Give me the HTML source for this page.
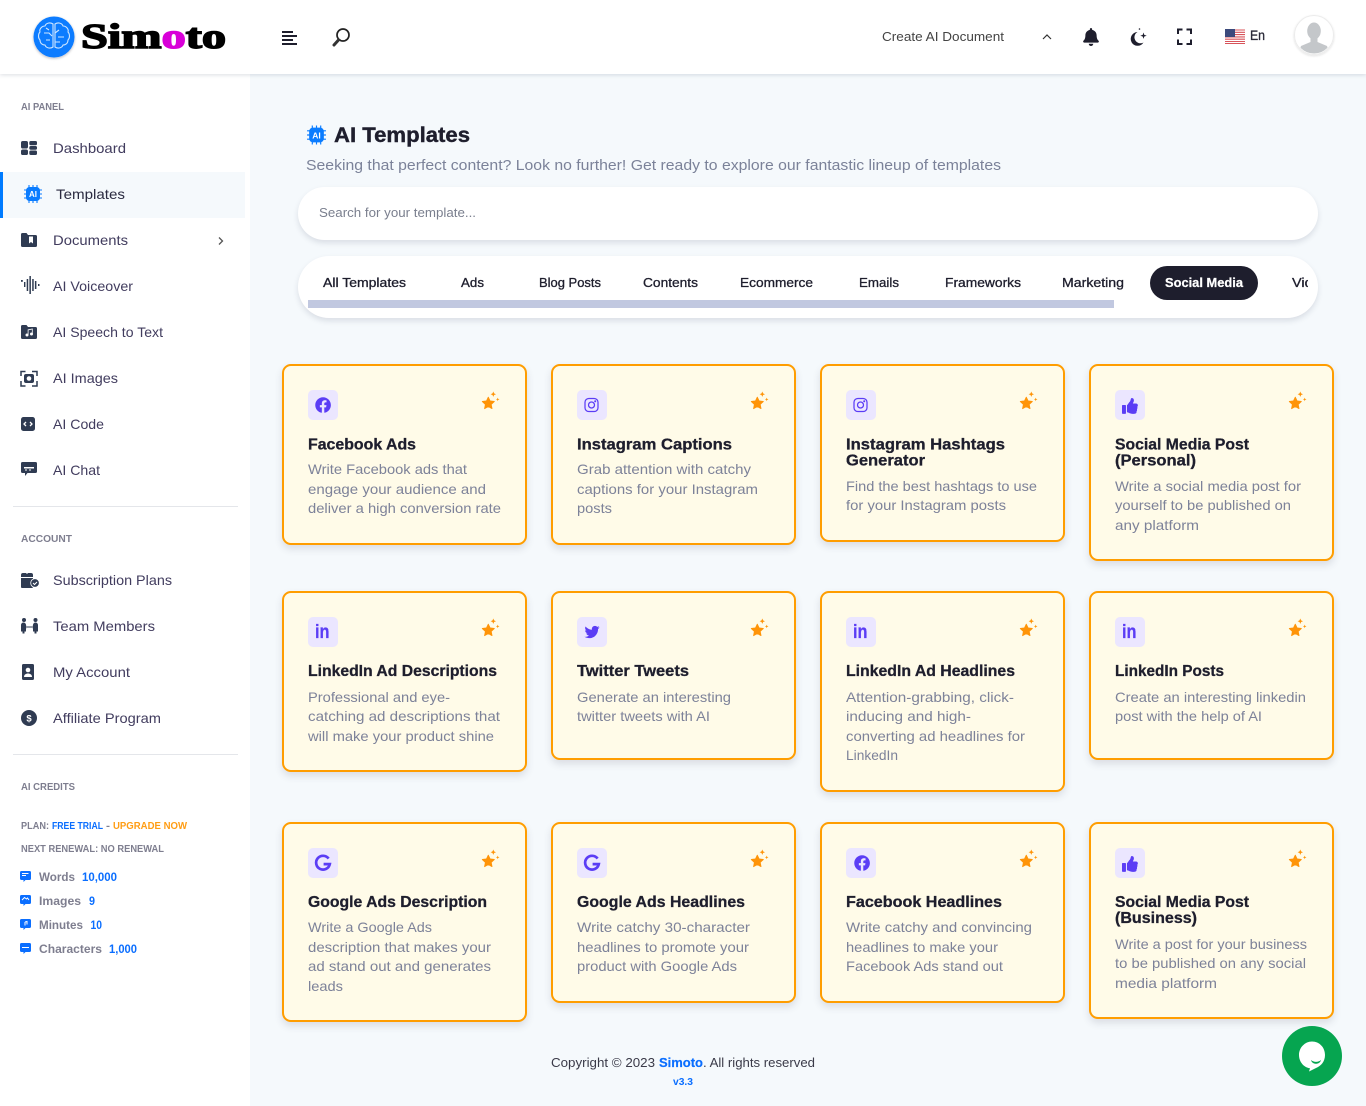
<!DOCTYPE html>
<html lang="en"><head><meta charset="utf-8"><title>AI Templates - Simoto</title>
<style>
*{box-sizing:border-box;margin:0;padding:0}
html,body{width:1366px;height:1106px;overflow:hidden;background:#f5f9fc;font-family:"Liberation Sans",sans-serif}
.a{position:absolute}
.head{left:0;top:0;width:1366px;height:74px;background:#fff;box-shadow:0 1px 4px rgba(40,50,80,.16)}
.side{left:0;top:74px;width:250px;height:1032px;background:#fff}
.act{left:0;top:172px;width:245px;height:46px;background:#f5f9fc;border-left:3px solid #007bff}
.hr{left:13px;width:225px;height:1px;background:#e4e6ea}
.pillbox{left:298px;width:1020px;background:#fff;box-shadow:0 3px 6px rgba(40,50,80,.13)}
.card{width:245px;background:#fffbe8;border:2px solid #ff9d00;border-radius:9px;box-shadow:0 4px 8px rgba(60,60,80,.14)}
.ib{width:30px;height:30px;background:#ebe6ff;border-radius:5px}
svg.o{position:absolute;left:0;top:0}
text{font-family:"Liberation Sans",sans-serif}
.n{font-size:14px;fill:#413c5e}
.s{font-size:10px;font-weight:700;fill:#7e7e8f}
.p{font-size:10px;font-weight:700;fill:#7e7e8f}
.c{font-size:11.5px;font-weight:700;fill:#7e7e8f}
.b{fill:#0a6eff}
.t{font-size:16px;font-weight:700;fill:#1e1e2d;stroke:#1e1e2d;stroke-width:.3}
.d{font-size:14px;fill:#7d8299}
.tb{font-size:12.5px;fill:#1e1e2d;stroke:#1e1e2d;stroke-width:.3}
</style></head><body>
<div class="a side"></div>
<div class="a head"></div>
<div class="a act"></div>
<div class="a hr" style="top:506px"></div>
<div class="a hr" style="top:754px"></div>
<div class="a pillbox" style="top:187px;height:53px;border-radius:27px"></div>
<div class="a pillbox" style="top:256px;height:62px;border-radius:31px"></div>
<div class="a" style="left:308px;top:300px;width:806px;height:8px;background:#c1c8e0"></div>
<div class="a" style="left:1150px;top:266px;width:108px;height:34px;border-radius:17px;background:#1e1e2d"></div>

<div class="a card" style="left:282px;top:364px;height:181px"></div>
<div class="a card" style="left:551px;top:364px;height:181px"></div>
<div class="a card" style="left:820px;top:364px;height:178px"></div>
<div class="a card" style="left:1089px;top:364px;height:197px"></div>
<div class="a card" style="left:282px;top:591px;height:181px"></div>
<div class="a card" style="left:551px;top:591px;height:169px"></div>
<div class="a card" style="left:820px;top:591px;height:201px"></div>
<div class="a card" style="left:1089px;top:591px;height:169px"></div>
<div class="a card" style="left:282px;top:822px;height:200px"></div>
<div class="a card" style="left:551px;top:822px;height:181px"></div>
<div class="a card" style="left:820px;top:822px;height:181px"></div>
<div class="a card" style="left:1089px;top:822px;height:197px"></div>

<div class="a ib" style="left:308px;top:390px"></div><div class="a ib" style="left:577px;top:390px"></div><div class="a ib" style="left:846px;top:390px"></div><div class="a ib" style="left:1115px;top:390px"></div>
<div class="a ib" style="left:308px;top:617px"></div><div class="a ib" style="left:577px;top:617px"></div><div class="a ib" style="left:846px;top:617px"></div><div class="a ib" style="left:1115px;top:617px"></div>
<div class="a ib" style="left:308px;top:848px"></div><div class="a ib" style="left:577px;top:848px"></div><div class="a ib" style="left:846px;top:848px"></div><div class="a ib" style="left:1115px;top:848px"></div>

<svg class="o" width="1366" height="1106" viewBox="0 0 1366 1106" xmlns="http://www.w3.org/2000/svg">
<defs>
<filter id="ls" x="-20%" y="-20%" width="140%" height="150%"><feDropShadow dx="0" dy="1" stdDeviation="1.2" flood-color="#223" flood-opacity=".3"/></filter>
<filter id="as" x="-20%" y="-20%" width="140%" height="150%"><feDropShadow dx="0" dy="1" stdDeviation="1" flood-color="#223" flood-opacity=".14"/></filter>
<clipPath id="vc"><rect x="1280" y="270" width="28" height="28"/></clipPath>
<clipPath id="av"><circle cx="1314" cy="35" r="18.500"/></clipPath>
<symbol id="star" viewBox="0 0 30 30" overflow="visible">
<path d="M8.300 7.200l1.800 3.800 4.200.5-3.100 2.900.8 4.200-3.700-2.100-3.700 2.100.8-4.200-3.100-2.900 4.200-.5z" fill="#ff9408" stroke="#ff9408" stroke-width=".9" stroke-linejoin="round"/>
<path d="M13.300 1.500l.8 1.900 1.900.8-1.900.8-.8 1.900-.8-1.900-1.900-.8 1.900-.8zM17.700 7.600l.5 1.300 1.300.5-1.300.5-.5 1.300-.5-1.300-1.300-.5 1.300-.5z" fill="#ff9408"/>
</symbol>
<path id="fb" d="M504 256C504 119 393 8 256 8S8 119 8 256c0 123.78 90.69 226.38 209.25 245V327.69h-63V256h63v-54.64c0-62.15 37-96.48 93.67-96.48 27.14 0 55.52 4.84 55.52 4.84v61h-31.28c-30.8 0-40.41 19.12-40.41 38.73V256h68.78l-11 71.69h-57.78V501C413.31 482.38 504 379.78 504 256z"/>
<path id="tw" d="M459.37 151.716c.325 4.548.325 9.097.325 13.645 0 138.72-105.583 298.558-298.558 298.558-59.452 0-114.68-17.219-161.137-47.106 8.447.974 16.568 1.299 25.34 1.299 49.055 0 94.213-16.568 130.274-44.832-46.132-.975-84.792-31.188-98.112-72.772 6.498.974 12.995 1.624 19.818 1.624 9.421 0 18.843-1.3 27.614-3.573-48.081-9.747-84.143-51.98-84.143-102.985v-1.299c13.969 7.797 30.214 12.67 47.431 13.319-28.264-18.843-46.781-51.005-46.781-87.391 0-19.492 5.197-37.36 14.294-52.954 51.655 63.675 129.3 105.258 216.365 109.807-1.624-7.797-2.599-15.918-2.599-24.04 0-57.828 46.782-104.934 104.934-104.934 30.213 0 57.502 12.67 76.67 33.137 23.715-4.548 46.456-13.32 66.599-25.34-7.798 24.366-24.366 44.833-46.132 57.827 21.117-2.273 41.584-8.122 60.426-16.243-14.292 20.791-32.161 39.308-52.628 54.253z"/>
<path id="th" d="M104 224H24c-13.255 0-24 10.745-24 24v240c0 13.255 10.745 24 24 24h80c13.255 0 24-10.745 24-24V248c0-13.255-10.745-24-24-24zM384 81.452c0 42.416-25.97 66.208-33.277 94.548h101.723c33.397 0 59.397 27.746 59.553 58.098.084 17.938-7.546 37.249-19.439 49.197l-.11.11c9.836 23.337 8.237 56.037-9.308 79.469 8.681 25.895-.069 57.704-16.382 74.757 4.298 17.598 2.244 32.575-6.148 44.632C440.202 511.587 389.616 512 346.839 512l-2.845-.001c-48.287-.017-87.806-17.598-119.56-31.725-15.957-7.099-36.821-15.887-52.651-16.178-6.54-.12-11.783-5.457-11.783-11.998v-213.77c0-3.2 1.282-6.271 3.558-8.521 39.614-39.144 56.648-80.587 89.117-113.111 14.804-14.832 20.188-37.236 25.393-58.902C282.515 39.293 291.817 0 312 0c24 0 72 8 72 81.452z"/>
<g id="ig" fill="none" stroke="#5b3df5" stroke-width="1.250"><rect x="1" y="1" width="13" height="13" rx="3.800"/><circle cx="7.500" cy="7.500" r="3"/><circle cx="11.200" cy="3.800" r=".4" fill="#5b3df5"/></g>
<g id="gg" fill="none" stroke="#5b3df5" stroke-width="2.700"><path d="M13.600 3.600A6.900 6.900 0 1 0 14.800 9.100H8.600"/></g>
<g id="chip">
<path d="M6 1v18M10 1v18M14 1v18M1 6h18M1 10h18M1 14h18" stroke="#0a7cff" stroke-width="1.100"/>
<rect x="3" y="3" width="14" height="14" rx="3.500" fill="#0a7cff"/>
</g>
<g id="bub"><path d="M1.500 0h8A1.500 1.500 0 0 1 11 1.500v6A1.500 1.500 0 0 1 9.500 9H5.500L3.500 11V9H1.500A1.500 1.500 0 0 1 0 7.500v-6A1.500 1.500 0 0 1 1.500 0z" fill="#0a6eff"/></g>
</defs>

<!-- logo -->
<circle cx="54" cy="37" r="20.500" fill="#0a7cff" filter="url(#ls)"/>
<g fill="none" stroke="#cfe6ff" stroke-width="1.100">
<path d="M53 24c-3-2-7-1-8 2-3 0-6 3-5 6-2 2-2 6 0 8 0 3 2 5 5 5 1 3 5 4 8 2zM55 24c3-2 7-1 8 2 3 0 6 3 5 6 2 2 2 6 0 8 0 3-2 5-5 5-1 3-5 4-8 2z"/>
<path d="M44 33h5l3 3M46 40h4M59 30l-4 3M58 37h6M55 42h5M46 28l3 2"/>
</g>
<text x="81" y="48" font-size="35" font-weight="700" textLength="145" lengthAdjust="spacingAndGlyphs" fill="#000" stroke="#000" stroke-width="1.500" style="font-family:'Liberation Serif',serif">Sim<tspan fill="#d800d8" stroke="#d800d8">o</tspan>to</text>

<!-- header left icons -->
<path d="M282 32h11M282 36h15M282 40h11M282 44h15" stroke="#1e1e2d" stroke-width="2"/>
<circle cx="343" cy="35" r="6" fill="none" stroke="#222" stroke-width="1.700"/>
<path d="M338.500 40l-4.500 5" stroke="#333" stroke-width="3" stroke-linecap="round"/>

<!-- header right -->
<text x="882" y="41" font-size="12.500" fill="#444" textLength="122" lengthAdjust="spacingAndGlyphs">Create AI Document</text>
<path d="M1043 39l4-4 4 4" fill="none" stroke="#333" stroke-width="1.200"/>
<svg x="1083" y="28" width="16" height="18" viewBox="0 0 448 512"><path fill="#1e1e2d" d="M224 512c35.320 0 63.970-28.650 63.970-64H160.030c0 35.350 28.650 64 63.970 64zm215.390-149.710c-19.320-20.760-55.470-51.990-55.470-154.290 0-77.700-54.480-139.900-127.940-155.160V32c0-17.670-14.320-32-31.980-32s-31.980 14.330-31.980 32v20.840C118.560 68.100 64.080 130.300 64.080 208c0 102.300-36.150 133.530-55.470 154.290-6 6.450-8.660 14.160-8.610 21.710.11 16.400 12.980 32 32.100 32h383.800c19.120 0 32-15.600 32.100-32 .05-7.550-2.610-15.270-8.610-21.710z"/></svg>
<path d="M1137.500 32a6.900 6.900 0 1 0 6 10.500a6 6 0 0 1-6-10.500z" fill="#1e1e2d"/>
<path d="M1143.500 32.500l.8 2.400 2.400.8-2.400.8-.8 2.400-.8-2.400-2.400-.8 2.400-.8z" fill="#1e1e2d"/>
<circle cx="1139.500" cy="29" r=".8" fill="#1e1e2d"/>
<path d="M1178 34v-4.500h4.500M1186.500 29.500h4.500v4.500M1191 39.500v4.500h-4.500M1182.500 44h-4.500v-4.500" fill="none" stroke="#1e1e2d" stroke-width="2"/>
<rect x="1225" y="29" width="20" height="15" fill="#fff"/>
<path d="M1225 30h20M1225 32.300h20M1225 34.600h20M1225 36.900h20M1225 39.200h20M1225 41.500h20M1225 43.500h20" stroke="#d8535a" stroke-width="1.100"/>
<rect x="1225" y="29" width="10" height="8" fill="#3c4a7c"/>
<text x="1250" y="40" font-size="13.500" fill="#2b2b3a" stroke="#2b2b3a" stroke-width=".3" textLength="15" lengthAdjust="spacingAndGlyphs">En</text>
<circle cx="1314" cy="35" r="19.500" fill="#fff" stroke="#ececec" filter="url(#as)"/>
<g clip-path="url(#av)" fill="#c4c7ca"><ellipse cx="1314" cy="31" rx="6.800" ry="8.500"/><path d="M1310.500 37h7v5l9.500 4 3 9h-32l3-9 9.500-4z"/></g>

<!-- sidebar -->
<text class="s" x="21" y="110" textLength="43" lengthAdjust="spacingAndGlyphs">AI PANEL</text>
<text class="n" x="53" y="153" textLength="73" lengthAdjust="spacingAndGlyphs">Dashboard</text>
<text class="n" style="fill:#2a2a40" x="56" y="199" textLength="69" lengthAdjust="spacingAndGlyphs">Templates</text>
<text class="n" x="53" y="245" textLength="75" lengthAdjust="spacingAndGlyphs">Documents</text>
<text class="n" x="53" y="291" textLength="80" lengthAdjust="spacingAndGlyphs">AI Voiceover</text>
<text class="n" x="53" y="337" textLength="110" lengthAdjust="spacingAndGlyphs">AI Speech to Text</text>
<text class="n" x="53" y="383" textLength="65" lengthAdjust="spacingAndGlyphs">AI Images</text>
<text class="n" x="53" y="429" textLength="51" lengthAdjust="spacingAndGlyphs">AI Code</text>
<text class="n" x="53" y="475" textLength="47" lengthAdjust="spacingAndGlyphs">AI Chat</text>
<text class="s" x="21" y="542" textLength="51" lengthAdjust="spacingAndGlyphs">ACCOUNT</text>
<text class="n" x="53" y="585" textLength="119" lengthAdjust="spacingAndGlyphs">Subscription Plans</text>
<text class="n" x="53" y="631" textLength="102" lengthAdjust="spacingAndGlyphs">Team Members</text>
<text class="n" x="53" y="677" textLength="77" lengthAdjust="spacingAndGlyphs">My Account</text>
<text class="n" x="53" y="723" textLength="108" lengthAdjust="spacingAndGlyphs">Affiliate Program</text>
<text class="s" x="21" y="790" textLength="54" lengthAdjust="spacingAndGlyphs">AI CREDITS</text>
<text class="p" x="21" y="829" textLength="28" lengthAdjust="spacingAndGlyphs">PLAN:</text>
<text class="p b" x="52" y="829" textLength="51" lengthAdjust="spacingAndGlyphs">FREE TRIAL</text>
<text class="p" x="106" y="829" textLength="4" lengthAdjust="spacingAndGlyphs">-</text>
<text class="p" style="fill:#ff9d14" x="113" y="829" textLength="74" lengthAdjust="spacingAndGlyphs">UPGRADE NOW</text>
<text class="p" x="21" y="852" textLength="143" lengthAdjust="spacingAndGlyphs">NEXT RENEWAL: NO RENEWAL</text>
<text class="c" x="39" y="881" textLength="36" lengthAdjust="spacingAndGlyphs">Words</text><text class="c b" x="82" y="881" textLength="35" lengthAdjust="spacingAndGlyphs">10,000</text>
<text class="c" x="39" y="905" textLength="42" lengthAdjust="spacingAndGlyphs">Images</text><text class="c b" x="89" y="905" textLength="6" lengthAdjust="spacingAndGlyphs">9</text>
<text class="c" x="39" y="929" textLength="44" lengthAdjust="spacingAndGlyphs">Minutes</text><text class="c b" x="90.500" y="929" textLength="11.500" lengthAdjust="spacingAndGlyphs">10</text>
<text class="c" x="39" y="953" textLength="63" lengthAdjust="spacingAndGlyphs">Characters</text><text class="c b" x="109" y="953" textLength="28" lengthAdjust="spacingAndGlyphs">1,000</text>

<!-- sidebar icons -->
<g fill="#2f3b52">
<rect x="21" y="141" width="7" height="7.500" rx="1.800"/><rect x="21" y="149.500" width="7" height="5.500" rx="1.800"/>
<rect x="29.300" y="141" width="7.700" height="4.200" rx="1.500"/><rect x="29.300" y="146" width="7.700" height="3.700" rx="1.500"/><rect x="29.300" y="150.500" width="7.700" height="4.500" rx="1.500"/>
<path d="M21 234.500a1.500 1.500 0 0 1 1.500-1.500h4l1.500 2h7.500a1.500 1.500 0 0 1 1.500 1.500v9a1.500 1.500 0 0 1-1.500 1.500h-13a1.500 1.500 0 0 1-1.500-1.500z"/>
<path d="M21 326.500a1.500 1.500 0 0 1 1.500-1.500h4l1.500 2h7.500a1.500 1.500 0 0 1 1.500 1.500v9a1.500 1.500 0 0 1-1.500 1.500h-13a1.500 1.500 0 0 1-1.500-1.500z"/>
<rect x="21" y="417" width="14" height="14" rx="2.500"/>
<path d="M22.500 462h13a1.500 1.500 0 0 1 1.500 1.500v8a1.500 1.500 0 0 1-1.500 1.500h-8l-2.500 3v-3h-2.500a1.500 1.500 0 0 1-1.500-1.500v-8a1.500 1.500 0 0 1 1.500-1.500z"/>
<path d="M21 578h12v9a1 1 0 0 1-1 1H22a1 1 0 0 1-1-1zM21 577v-2a2 2 0 0 1 2-2h3l1 1 1-1h3a2 2 0 0 1 2 2v2z"/>
<circle cx="35" cy="583" r="4.300" stroke="#fff" stroke-width=".8"/>
<circle cx="24" cy="620" r="2"/><circle cx="35.500" cy="620" r="2"/>
<path d="M21 625a2.500 2.500 0 0 1 5 0v6.500h-1.500v2h-2v-2H21zM33 625a2.500 2.500 0 0 1 5 0v6.500h-1.500v2h-2v-2H33z"/>
<path d="M23.500 664h9a1.500 1.500 0 0 1 1.500 1.500v13a1.500 1.500 0 0 1-1.500 1.500h-9a1.500 1.500 0 0 1-1.500-1.500v-13a1.500 1.500 0 0 1 1.500-1.500z"/>
<circle cx="29" cy="718" r="8"/>
<rect x="21" y="280" width="1.800" height="1.800"/><rect x="24" y="282" width="1.400" height="5" /><rect x="26.700" y="279" width="1.500" height="12"/><rect x="29.400" y="276" width="1.500" height="18"/><rect x="32.200" y="279" width="1.500" height="12"/><rect x="34.900" y="281" width="1.500" height="8"/><rect x="38" y="284" width="1.500" height="2"/>
</g>
<g fill="#fff">
<path d="M31.500 236.500h4v7l-2-1.500-2 1.500z" transform="translate(-2.500,0)"/>
<circle cx="27" cy="335" r="1.500"/><circle cx="31.500" cy="334" r="1.500"/><path d="M27.700 329.500l5-1v5.500h-.8v-4.500l-3.400.7v5h-.8z"/>
<path d="M26 422l-2 2 2 2M30 422l2 2-2 2" fill="none" stroke="#fff" stroke-width="1.300"/>
<path d="M24 467h10v1.500H24zM25 469.500h2v1h-2zM29 469.500h2v1h-2z"/>
<path d="M33 583l1.500 1.500 2.500-2.500" fill="none" stroke="#fff" stroke-width="1"/>
<circle cx="28" cy="670" r="2.300"/><path d="M24 677c0-2.500 2-3.500 4-3.500s4 1 4 3.500z"/>
</g>
<text x="29" y="721.500" font-size="9.500" font-weight="700" fill="#fff" text-anchor="middle">$</text>
<path d="M24 627h11M26 625l-2 2 2 2M33 625l2 2-2 2" fill="none" stroke="#2f3b52" stroke-width="1"/>
<path d="M21 376v-4.500h4.500M32 371.500h5v4.500M37 381v5h-5M25.500 386H21v-5" fill="none" stroke="#2f3b52" stroke-width="1.500"/>
<rect x="24" y="374" width="10" height="9" rx="2" fill="#2f3b52"/><circle cx="29" cy="378.500" r="2.300" fill="#fff"/>
<path d="M219 237.500l3.500 3.500-3.500 3.500" fill="none" stroke="#555" stroke-width="1.300"/>
<use href="#chip" x="23" y="184"/>
<text x="33" y="197" font-size="8" font-weight="700" fill="#fff" text-anchor="middle">AI</text>
<use href="#bub" x="20" y="871"/><use href="#bub" x="20" y="895"/><use href="#bub" x="20" y="919"/><use href="#bub" x="20" y="943"/>
<path d="M22 873.500h6.500M22 875.500h4M22 900l2.500-2.500 2 1.500 1-1 1.500 2M25 922l0 3.500M25 922l2-.5 0 3M22 947.500h7" stroke="#fff" stroke-width="1" fill="none"/>

<!-- title -->
<g transform="translate(306,124.500) scale(1.050)"><use href="#chip"/></g>
<text x="316.500" y="138.500" font-size="8.500" font-weight="700" fill="#fff" text-anchor="middle">AI</text>
<text x="334" y="142" font-size="21" font-weight="700" fill="#1e1e2d" stroke="#1e1e2d" stroke-width=".4" textLength="136" lengthAdjust="spacingAndGlyphs">AI Templates</text>
<text x="306" y="170" font-size="14.500" fill="#7b8299" textLength="695" lengthAdjust="spacingAndGlyphs">Seeking that perfect content? Look no further! Get ready to explore our fantastic lineup of templates</text>
<text x="319" y="217" font-size="12.500" fill="#7a7f8e" textLength="157" lengthAdjust="spacingAndGlyphs">Search for your template...</text>

<!-- tabs -->
<text class="tb" x="323" y="287" textLength="83" lengthAdjust="spacingAndGlyphs">All Templates</text>
<text class="tb" x="461" y="287" textLength="23" lengthAdjust="spacingAndGlyphs">Ads</text>
<text class="tb" x="539" y="287" textLength="62" lengthAdjust="spacingAndGlyphs">Blog Posts</text>
<text class="tb" x="643" y="287" textLength="55" lengthAdjust="spacingAndGlyphs">Contents</text>
<text class="tb" x="740" y="287" textLength="73" lengthAdjust="spacingAndGlyphs">Ecommerce</text>
<text class="tb" x="859" y="287" textLength="40" lengthAdjust="spacingAndGlyphs">Emails</text>
<text class="tb" x="945" y="287" textLength="76" lengthAdjust="spacingAndGlyphs">Frameworks</text>
<text class="tb" x="1062" y="287" textLength="62" lengthAdjust="spacingAndGlyphs">Marketing</text>
<text x="1165" y="287" font-size="12.500" font-weight="700" fill="#fff" stroke="#fff" stroke-width=".25" textLength="78" lengthAdjust="spacingAndGlyphs">Social Media</text>
<g clip-path="url(#vc)"><text class="tb" x="1292" y="287" textLength="44" lengthAdjust="spacingAndGlyphs">Videos</text></g>

<!-- stars -->
<use href="#star" x="480" y="390" width="30" height="30"/><use href="#star" x="749" y="390" width="30" height="30"/><use href="#star" x="1018" y="390" width="30" height="30"/><use href="#star" x="1287" y="390" width="30" height="30"/>
<use href="#star" x="480" y="617" width="30" height="30"/><use href="#star" x="749" y="617" width="30" height="30"/><use href="#star" x="1018" y="617" width="30" height="30"/><use href="#star" x="1287" y="617" width="30" height="30"/>
<use href="#star" x="480" y="848" width="30" height="30"/><use href="#star" x="749" y="848" width="30" height="30"/><use href="#star" x="1018" y="848" width="30" height="30"/><use href="#star" x="1287" y="848" width="30" height="30"/>

<!-- card icons -->
<g fill="#5b3df5">
<g transform="translate(315,397) scale(.0315)"><use href="#fb"/></g>
<g transform="translate(854,855) scale(.0315)"><use href="#fb"/></g>
<g transform="translate(584.500,624.500) scale(.0295)"><use href="#tw"/></g>
<g transform="translate(1122,398) scale(.031)"><use href="#th"/></g>
<g transform="translate(1122,856) scale(.031)"><use href="#th"/></g>
</g>
<use href="#ig" x="584" y="397.500"/><use href="#ig" x="853" y="397.500"/>
<use href="#gg" x="315" y="855"/><use href="#gg" x="584" y="855"/>
<g font-size="19" font-weight="700" fill="#5b3df5" stroke="#5b3df5" stroke-width=".3">
<text x="315" y="638" textLength="14.500" lengthAdjust="spacingAndGlyphs">in</text>
<text x="853" y="638" textLength="14.500" lengthAdjust="spacingAndGlyphs">in</text>
<text x="1122" y="638" textLength="14.500" lengthAdjust="spacingAndGlyphs">in</text>
</g>

<!-- row 1 text -->
<text class="t" x="308" y="449.500" textLength="108" lengthAdjust="spacingAndGlyphs">Facebook Ads</text>
<text class="d" x="308" y="474" textLength="159" lengthAdjust="spacingAndGlyphs">Write Facebook ads that</text>
<text class="d" x="308" y="494" textLength="178" lengthAdjust="spacingAndGlyphs">engage your audience and</text>
<text class="d" x="308" y="513" textLength="193" lengthAdjust="spacingAndGlyphs">deliver a high conversion rate</text>
<text class="t" x="577" y="449.500" textLength="155" lengthAdjust="spacingAndGlyphs">Instagram Captions</text>
<text class="d" x="577" y="474" textLength="174" lengthAdjust="spacingAndGlyphs">Grab attention with catchy</text>
<text class="d" x="577" y="494" textLength="181" lengthAdjust="spacingAndGlyphs">captions for your Instagram</text>
<text class="d" x="577" y="513" textLength="35" lengthAdjust="spacingAndGlyphs">posts</text>
<text class="t" x="846" y="449.500" textLength="159" lengthAdjust="spacingAndGlyphs">Instagram Hashtags</text>
<text class="t" x="846" y="465.500" textLength="79" lengthAdjust="spacingAndGlyphs">Generator</text>
<text class="d" x="846" y="491" textLength="191" lengthAdjust="spacingAndGlyphs">Find the best hashtags to use</text>
<text class="d" x="846" y="510" textLength="160" lengthAdjust="spacingAndGlyphs">for your Instagram posts</text>
<text class="t" x="1115" y="449.500" textLength="134" lengthAdjust="spacingAndGlyphs">Social Media Post</text>
<text class="t" x="1115" y="465.500" textLength="81" lengthAdjust="spacingAndGlyphs">(Personal)</text>
<text class="d" x="1115" y="491" textLength="186" lengthAdjust="spacingAndGlyphs">Write a social media post for</text>
<text class="d" x="1115" y="510" textLength="176" lengthAdjust="spacingAndGlyphs">yourself to be published on</text>
<text class="d" x="1115" y="530" textLength="84" lengthAdjust="spacingAndGlyphs">any platform</text>

<!-- row 2 text -->
<text class="t" x="308" y="676" textLength="189" lengthAdjust="spacingAndGlyphs">LinkedIn Ad Descriptions</text>
<text class="d" x="308" y="702" textLength="142" lengthAdjust="spacingAndGlyphs">Professional and eye-</text>
<text class="d" x="308" y="721" textLength="192" lengthAdjust="spacingAndGlyphs">catching ad descriptions that</text>
<text class="d" x="308" y="741" textLength="186" lengthAdjust="spacingAndGlyphs">will make your product shine</text>
<text class="t" x="577" y="676" textLength="112" lengthAdjust="spacingAndGlyphs">Twitter Tweets</text>
<text class="d" x="577" y="702" textLength="154" lengthAdjust="spacingAndGlyphs">Generate an interesting</text>
<text class="d" x="577" y="721" textLength="133" lengthAdjust="spacingAndGlyphs">twitter tweets with AI</text>
<text class="t" x="846" y="676" textLength="169" lengthAdjust="spacingAndGlyphs">LinkedIn Ad Headlines</text>
<text class="d" x="846" y="702" textLength="168" lengthAdjust="spacingAndGlyphs">Attention-grabbing, click-</text>
<text class="d" x="846" y="721" textLength="125" lengthAdjust="spacingAndGlyphs">inducing and high-</text>
<text class="d" x="846" y="741" textLength="179" lengthAdjust="spacingAndGlyphs">converting ad headlines for</text>
<text class="d" x="846" y="760" textLength="52" lengthAdjust="spacingAndGlyphs">LinkedIn</text>
<text class="t" x="1115" y="676" textLength="109" lengthAdjust="spacingAndGlyphs">LinkedIn Posts</text>
<text class="d" x="1115" y="702" textLength="191" lengthAdjust="spacingAndGlyphs">Create an interesting linkedin</text>
<text class="d" x="1115" y="721" textLength="147" lengthAdjust="spacingAndGlyphs">post with the help of AI</text>

<!-- row 3 text -->
<text class="t" x="308" y="907" textLength="179" lengthAdjust="spacingAndGlyphs">Google Ads Description</text>
<text class="d" x="308" y="932" textLength="124" lengthAdjust="spacingAndGlyphs">Write a Google Ads</text>
<text class="d" x="308" y="952" textLength="183" lengthAdjust="spacingAndGlyphs">description that makes your</text>
<text class="d" x="308" y="971" textLength="183" lengthAdjust="spacingAndGlyphs">ad stand out and generates</text>
<text class="d" x="308" y="991" textLength="35" lengthAdjust="spacingAndGlyphs">leads</text>
<text class="t" x="577" y="907" textLength="168" lengthAdjust="spacingAndGlyphs">Google Ads Headlines</text>
<text class="d" x="577" y="932" textLength="173" lengthAdjust="spacingAndGlyphs">Write catchy 30-character</text>
<text class="d" x="577" y="952" textLength="172" lengthAdjust="spacingAndGlyphs">headlines to promote your</text>
<text class="d" x="577" y="971" textLength="160" lengthAdjust="spacingAndGlyphs">product with Google Ads</text>
<text class="t" x="846" y="907" textLength="156" lengthAdjust="spacingAndGlyphs">Facebook Headlines</text>
<text class="d" x="846" y="932" textLength="186" lengthAdjust="spacingAndGlyphs">Write catchy and convincing</text>
<text class="d" x="846" y="952" textLength="152" lengthAdjust="spacingAndGlyphs">headlines to make your</text>
<text class="d" x="846" y="971" textLength="157" lengthAdjust="spacingAndGlyphs">Facebook Ads stand out</text>
<text class="t" x="1115" y="907" textLength="134" lengthAdjust="spacingAndGlyphs">Social Media Post</text>
<text class="t" x="1115" y="923" textLength="82" lengthAdjust="spacingAndGlyphs">(Business)</text>
<text class="d" x="1115" y="949" textLength="192" lengthAdjust="spacingAndGlyphs">Write a post for your business</text>
<text class="d" x="1115" y="968" textLength="191" lengthAdjust="spacingAndGlyphs">to be published on any social</text>
<text class="d" x="1115" y="988" textLength="102" lengthAdjust="spacingAndGlyphs">media platform</text>

<!-- footer -->
<text x="551" y="1067" font-size="13" fill="#3a3a48" textLength="104" lengthAdjust="spacingAndGlyphs">Copyright © 2023</text>
<text x="659" y="1067" font-size="13" font-weight="700" fill="#0a6eff" stroke="#0a6eff" stroke-width=".2" textLength="44" lengthAdjust="spacingAndGlyphs">Simoto</text>
<text x="703" y="1067" font-size="13" fill="#3a3a48" textLength="112" lengthAdjust="spacingAndGlyphs">. All rights reserved</text>
<text x="673" y="1085" font-size="10" font-weight="700" fill="#0a6eff" textLength="20" lengthAdjust="spacingAndGlyphs">v3.3</text>

<!-- chat -->
<circle cx="1312" cy="1056" r="30" fill="#06a550"/>
<path d="M1312 1041.500c7.500 0 13 6 13 13.500 0 6.500-4 11-9 13l-7 3.500 1-3.200c-6-.8-11-6.300-11-13.300 0-7.500 6-13.500 13-13.500z" fill="#fff"/>
<path d="M1307 1059c3 2.500 7 2.500 10 0-1 5-9 5-10 0z" fill="#06a550" transform="translate(4,1)"/>
</svg>
</body></html>
